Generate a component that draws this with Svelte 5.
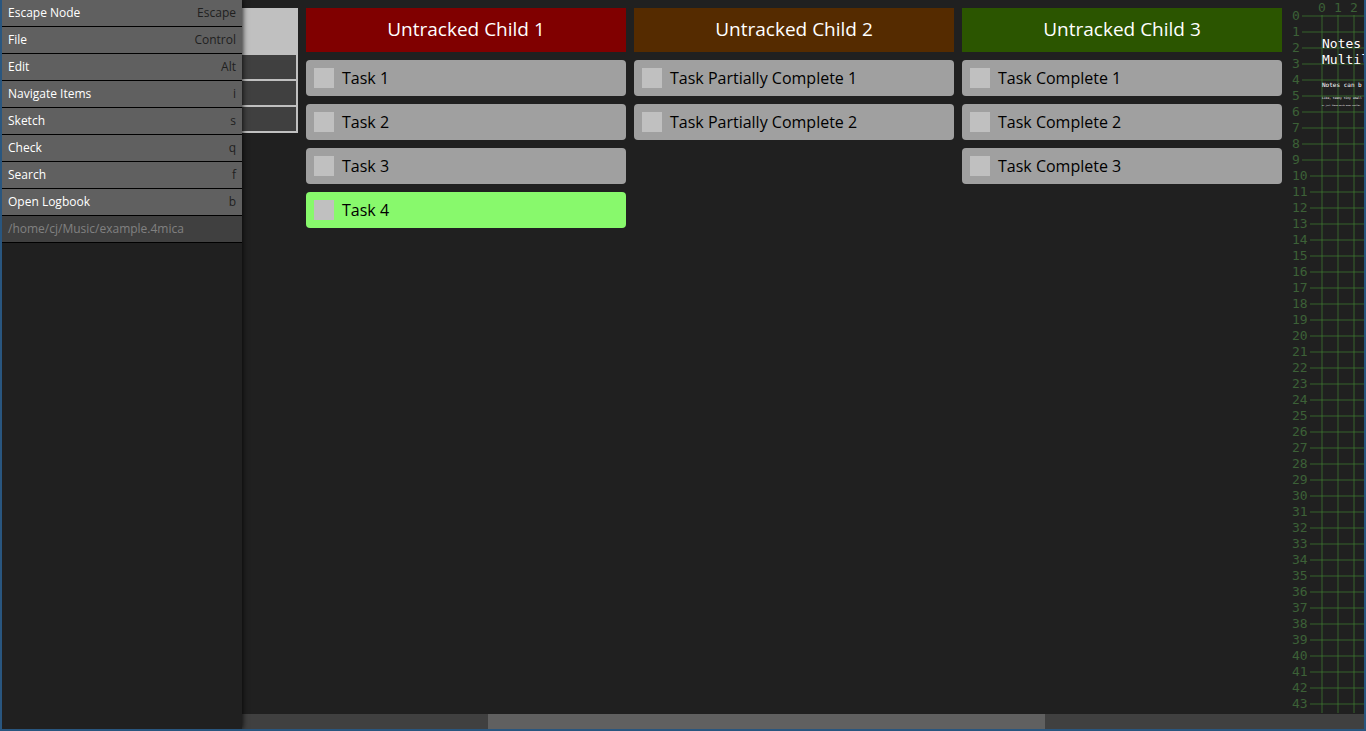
<script>
  const menu = [
    ['Escape Node', 'Escape'],
    ['File', 'Control'],
    ['Edit', 'Alt'],
    ['Navigate Items', 'i'],
    ['Sketch', 's'],
    ['Check', 'q'],
    ['Search', 'f'],
    ['Open Logbook', 'b'],
  ];
  const columns = [
    { title: 'Untracked Child 1', tone: 'red', tasks: ['Task 1', 'Task 2', 'Task 3', 'Task 4'] },
    { title: 'Untracked Child 2', tone: 'brown', tasks: ['Task Partially Complete 1', 'Task Partially Complete 2'] },
    { title: 'Untracked Child 3', tone: 'green', tasks: ['Task Complete 1', 'Task Complete 2', 'Task Complete 3'] },
  ];
  let selected = $state('Task 4');
  const rows = Array.from({ length: 44 }, (_, i) => i);
</script>

<div class="window">
  <nav class="menu" aria-label="Actions">
    {#each menu as [label, key]}
      <button class="action"><span>{label}</span><kbd>{key}</kbd></button>
    {/each}
    <div class="path">/home/cj/Music/example.4mica</div>
  </nav>

  <div class="workspace">
    <main class="board">
      <section class="peek">
        <div class="peek-head"></div>
        <div class="cell"></div>
        <div class="cell"></div>
        <div class="cell"></div>
      </section>

      {#each columns as column}
        <section class="column">
          <h2 class={column.tone}>{column.title}</h2>
          {#each column.tasks as task}
            <label class="task" class:selected={task === selected}>
              <input type="checkbox" onfocus={() => (selected = task)} />
              <span>{task}</span>
            </label>
          {/each}
        </section>
      {/each}

      <section class="sketch">
        <div class="x-axis"><span>0</span><span>1</span><span>2</span></div>
        <div class="rows">
          {#each rows as row}
            <div class="row"><span>{row}</span><i></i></div>
          {/each}
        </div>
        <div class="verticals"></div>
        <div class="notes">
          <p>Notes</p>
          <p>Multil</p>
          <p class="small">Notes can b</p>
          <p class="tiny">Like, teeny tiny small</p>
          <p class="micro">or just these words even smaller</p>
        </div>
      </section>
    </main>
    <div class="scrollbar"><div class="thumb"></div></div>
  </div>
</div>

<style>
  :global(body) {
    margin: 0;
    background: #202020;
  }
  .window {
    box-sizing: border-box;
    display: flex;
    height: 100vh;
    border: 2px solid #29567f;
    border-top: 0;
    overflow: hidden;
    background: #202020;
    color: #fff;
    font-family: 'Open Sans', sans-serif;
  }
  .menu {
    flex: none;
    width: 240px;
    z-index: 1;
    background: #202020;
    box-shadow: 0 0 6px #000;
  }
  .action,
  .path {
    box-sizing: border-box;
    display: flex;
    justify-content: space-between;
    align-items: center;
    width: 100%;
    height: 27px;
    padding: 0 6px 1px;
    border: 0;
    border-bottom: 1px solid #000;
    background: #606060;
    color: #fff;
    font: 12px 'Open Sans', sans-serif;
  }
  kbd {
    font: inherit;
    color: #202020;
  }
  .path {
    background: #404040;
    color: #808080;
  }
  .workspace {
    flex: 1;
    min-width: 0;
    display: flex;
    flex-direction: column;
  }
  .board {
    flex: 1;
    min-height: 0;
    display: flex;
    gap: 8px;
    overflow: hidden;
  }
  .peek {
    box-sizing: border-box;
    flex: none;
    align-self: flex-start;
    display: flex;
    flex-direction: column;
    gap: 2px;
    width: 56px;
    margin-top: 8px;
    padding: 0 2px 2px 0;
    background: #c0c0c0;
  }
  .peek-head {
    height: 45px;
  }
  .cell {
    height: 24px;
    background: #404040;
  }
  .column {
    flex: none;
    display: flex;
    flex-direction: column;
    gap: 8px;
    width: 320px;
    padding-top: 8px;
  }
  h2 {
    margin: 0;
    padding-bottom: 2px;
    font-size: 19px;
    font-weight: 400;
    line-height: 42px;
    text-align: center;
  }
  .red {
    background: #800000;
  }
  .brown {
    background: #552b00;
  }
  .green {
    background: #2b5500;
  }
  .task {
    display: flex;
    align-items: center;
    gap: 8px;
    height: 36px;
    padding: 0 8px;
    border-radius: 4px;
    background: #a0a0a0;
    color: #000;
    font-size: 16px;
  }
  .task span {
    padding-bottom: 1px;
  }
  .task.selected {
    background: #88f96c;
  }
  .task input {
    appearance: none;
    width: 20px;
    height: 20px;
    margin: 0;
    background: #c0c0c0;
  }
  .sketch {
    flex: 1;
    min-width: 0;
    position: relative;
    overflow: hidden;
    font-family: 'DejaVu Sans Mono', monospace;
    font-size: 13px;
    color: #3c6137;
  }
  .x-axis {
    display: flex;
    height: 8px;
    padding-left: 24px;
    line-height: 16px;
  }
  .x-axis span {
    flex: none;
    width: 16px;
    text-align: center;
  }
  .row {
    display: flex;
    align-items: center;
    gap: 2px;
    height: 16px;
    padding-left: 2px;
    line-height: 16px;
  }
  .row i {
    flex: 1;
    height: 2px;
    background: rgba(64, 128, 48, 0.35);
  }
  .verticals {
    position: absolute;
    inset: 15px 0 1px 31px;
    background: repeating-linear-gradient(to right, rgba(64, 128, 48, 0.35) 0 2px, transparent 2px 16px);
  }
  .notes {
    position: absolute;
    inset: 36px 0 auto 32px;
    color: #fff;
    white-space: nowrap;
  }
  .notes p {
    margin: 0;
    line-height: 16px;
  }
  .notes .small {
    margin-top: 10px;
    font-size: 6px;
    line-height: 14px;
  }
  .notes .tiny {
    font-size: 3px;
    line-height: 12px;
  }
  .notes .micro {
    font-size: 2px;
    line-height: 2px;
  }
  .scrollbar {
    height: 15px;
    background: #404040;
  }
  .thumb {
    width: 49.7%;
    height: 100%;
    margin-left: 21.9%;
    background: #606060;
  }
</style>
